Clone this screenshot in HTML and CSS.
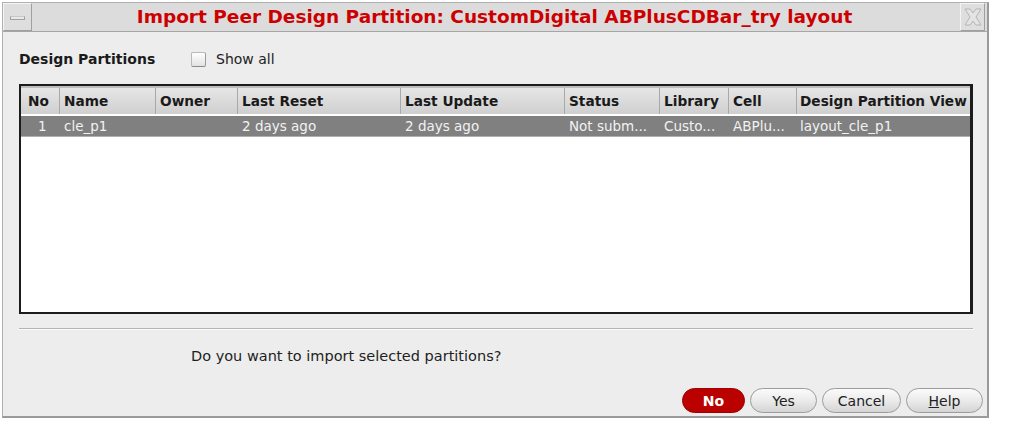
FILE: index.html
```html
<!DOCTYPE html>
<html>
<head>
<meta charset="utf-8">
<link rel="stylesheet" href="styles.css">
</head>
<body>
<div class="dialog">
  <div class="titlebar">
    <div class="tb-btn tb-min"><span class="min-bar"></span></div>
    <div class="title">Import Peer Design Partition: CustomDigital ABPlusCDBar_try layout</div>
    <div class="tb-btn tb-close">
      <svg width="22" height="22" viewBox="0 0 22 22">
        <path d="M3 3 L8 3 L11 7 L14 3 L19 3 L14 11 L19 19 L14 19 L11 15 L8 19 L3 19 L8 11 Z" fill="#e4e4e4" stroke="#b4b4b4" stroke-width="1"/>
      </svg>
    </div>
  </div>
  <div class="content">
    <div class="toprow">
      <span class="label">Design Partitions</span>
      <label class="check"><span class="box"></span><span>Show all</span></label>
    </div>
    <div class="table">
      <div class="row head">
        <div class="c c-no">No</div>
        <div class="c c-name">Name</div>
        <div class="c c-owner">Owner</div>
        <div class="c c-reset">Last Reset</div>
        <div class="c c-update">Last Update</div>
        <div class="c c-status">Status</div>
        <div class="c c-lib">Library</div>
        <div class="c c-cell">Cell</div>
        <div class="c c-view">Design Partition View</div>
      </div>
      <div class="row sel">
        <div class="c c-no num">1</div>
        <div class="c c-name">cle_p1</div>
        <div class="c c-owner"></div>
        <div class="c c-reset">2 days ago</div>
        <div class="c c-update">2 days ago</div>
        <div class="c c-status">Not subm...</div>
        <div class="c c-lib">Custo...</div>
        <div class="c c-cell">ABPlu...</div>
        <div class="c c-view">layout_cle_p1</div>
      </div>
    </div>
    <div class="sep"></div>
    <div class="question">Do you want to import selected partitions?</div>
    <div class="buttons">
      <button class="btn btn-no">No</button>
      <button class="btn btn-yes">Yes</button>
      <button class="btn btn-cancel">Cancel</button>
      <button class="btn btn-help"><u>H</u>elp</button>
    </div>
  </div>
</div>
</body>
</html>
```
FILE: styles.css
```css
html, body {
  margin: 0;
  padding: 0;
  background: #ffffff;
}
body {
  font-family: "DejaVu Sans", "Liberation Sans", sans-serif;
  font-size: 14px;
  color: #1a1a1a;
}
.dialog {
  margin: 2px 0 0 2px;
  width: 984px;
  height: 413px;
  border: 1px solid #b0b0b0;
  border-right: 2px solid #9a9a9a;
  border-bottom: 2px solid #9a9a9a;
  background: #ededed;
  display: flex;
  flex-direction: column;
}
.titlebar {
  height: 28px;
  display: flex;
  align-items: stretch;
  background: #dcdcdc;
  border-bottom: 1px solid #a6a6a6;
}
.tb-btn {
  display: flex;
  align-items: center;
  justify-content: center;
  background: #dedede;
  border: 1px solid #a0a0a0;
  border-top-color: #f4f4f4;
  border-left-color: #f4f4f4;
  box-sizing: border-box;
}
.tb-min {
  width: 29px;
}
.min-bar {
  display: block;
  width: 15px;
  height: 4px;
  background: #e8e8e8;
  border: 1px solid #a0a0a0;
  border-top-color: #c8c8c8;
  box-sizing: border-box;
  margin-top: 2px;
}
.tb-close {
  width: 25px;
  margin-right: 2px;
}
.title {
  flex: 1;
  text-align: center;
  color: #cc0000;
  font-weight: bold;
  font-size: 18.5px;
  line-height: 28px;
  padding-right: 3px;
}
.content {
  flex: 1;
  padding: 0 14px 0 16px;
  display: flex;
  flex-direction: column;
}
.toprow {
  height: 18px;
  margin-top: 18px;
  display: flex;
  align-items: center;
}
.label {
  font-weight: bold;
  width: 172px;
}
.check {
  display: flex;
  align-items: center;
  gap: 10px;
  color: #222;
}
.box {
  width: 15px;
  height: 15px;
  box-sizing: border-box;
  border: 1px solid #b8b8b8;
  border-bottom-color: #8a8a8a;
  border-right-color: #9a9a9a;
  border-radius: 2px;
  background: linear-gradient(#ffffff, #e2e2e2);
}
.table {
  margin-top: 16px;
  height: 230px;
  box-sizing: border-box;
  border: 2px solid #1c1c1c;
  border-right-width: 3px;
  background: #ffffff;
  display: flex;
  flex-direction: column;
}
.row {
  display: flex;
}
.head {
  height: 28px;
  background: linear-gradient(#e6e6e6, #cfcfcf);
  border-top: 2px solid #bdbdbd;
  box-sizing: border-box;
  font-weight: bold;
  font-size: 13.7px;
  color: #1a1a1a;
}
.head .c {
  border-right: 1px solid #a8a8a8;
  line-height: 26px;
}
.sel {
  height: 20px;
  margin-top: 2px;
  background: #808080;
  color: #f2f2f2;
  border-bottom: 1px solid #b0b0b0;
  font-size: 13.5px;
}
.sel .c {
  line-height: 20px;
  border-right: 1px solid transparent;
}
.c {
  box-sizing: border-box;
  padding-left: 4px;
  white-space: nowrap;
  overflow: hidden;
}
.c-no { width: 39px; padding-left: 7px; }
.c-no.num { padding-left: 17px; }
.c-name { width: 96px; }
.c-owner { width: 82px; }
.c-reset { width: 163px; }
.c-update { width: 164px; }
.c-status { width: 95px; }
.c-lib { width: 69px; }
.c-cell { width: 68px; }
.c-view { width: 172px; padding-left: 3px; }
.head .c-view { border-right: none; }
.sep {
  margin-top: 14px;
  height: 0;
  border-top: 1px solid #b4b4b4;
  border-bottom: 1px solid #fafafa;
}
.question {
  margin-top: 16px;
  padding-left: 172px;
  height: 20px;
  line-height: 20px;
  font-size: 14.5px;
  color: #1e1e1e;
}
.buttons {
  margin-top: 22px;
  margin-right: -10px;
  display: flex;
  justify-content: flex-end;
  gap: 5px;
}
.btn {
  height: 25px;
  border-radius: 13px;
  font-family: "DejaVu Sans", "Liberation Sans", sans-serif;
  font-size: 14px;
  color: #222;
  border: 1px solid #9c9c9c;
  background: linear-gradient(#fbfbfb, #e9e9e9 55%, #d4d4d4);
  padding: 0;
  cursor: default;
}
.btn-no {
  width: 63px;
  background: #bb0000;
  border-color: #a00000;
  color: #ffffff;
  font-weight: bold;
}
.btn-yes { width: 67px; }
.btn-cancel { width: 79px; }
.btn-help { width: 77px; }
```
